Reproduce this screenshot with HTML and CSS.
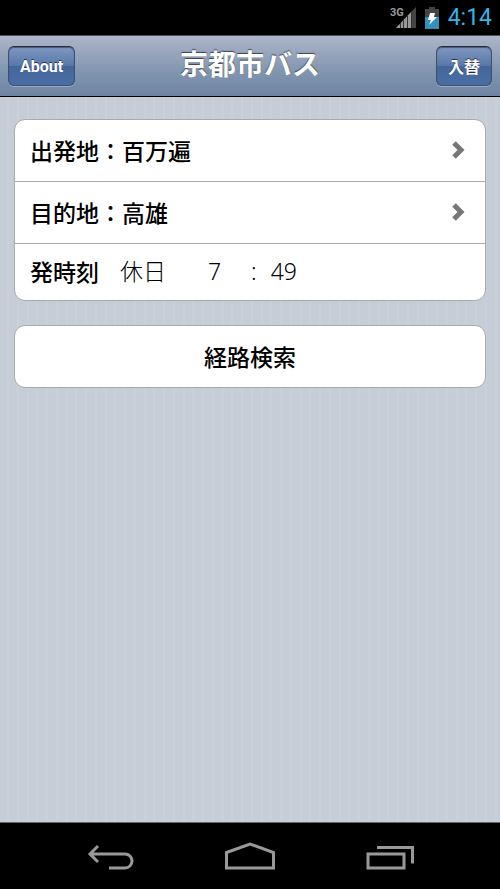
FILE: index.html
```
<!DOCTYPE html>
<html lang="ja">
<head>
    <meta charset="UTF-8">
    <meta name="viewport" content="width=device-width, initial-scale=1.0">
    <title>京都市バス</title>
    <link rel="stylesheet" href="styles.css">
</head>
<body>

<div class="statusbar">
    <svg class="signal" width="28" height="24" viewBox="0 0 28 24">
        <text class="network" x="0" y="10">3G</text>
        <path fill="#444" d="M26 1v21H6z"/>
        <path fill="#999" d="M21 6v16H6z"/>
        <path stroke="#333" d="M10.500 17v5M13.500 13v9M17.500 9v13M21.500 5v17"/>
    </svg>
    <svg class="battery" width="14" height="22" viewBox="0 0 14 22">
        <path fill="#444" d="M4 0h6v2h4v8H0V2h4z"/>
        <path fill="#3191b8" d="M0 10h14v12H0z"/>
        <path fill="#fff" d="M5 6h5l-1 4h3l-8 8 2-5H3z"/>
    </svg>
    <span class="clock">4:14</span>
</div>

<header class="toolbar">
    <button class="tool" type="button">About</button>
    <h1>京都市バス</h1>
    <button class="tool" type="button">入替</button>
</header>

<main>
    <form id="search">
        <ul class="rounded">
            <li>
                <a class="row" href="#from">出発地：百万遍
                    <svg class="chevron" width="14" height="18" viewBox="0 0 14 18"><path d="M3 2l7 7-7 7"/></svg>
                </a>
            </li>
            <li>
                <a class="row" href="#to">目的地：高雄
                    <svg class="chevron" width="14" height="18" viewBox="0 0 14 18"><path d="M3 2l7 7-7 7"/></svg>
                </a>
            </li>
            <li class="time">
                <label for="day">発時刻</label>
                <select id="day" class="day">
                    <option>平日</option>
                    <option selected>休日</option>
                </select>
                <select class="hour" aria-label="時">
                    <option>6</option>
                    <option selected>7</option>
                    <option>8</option>
                </select>
                <span class="colon">:</span>
                <select class="minute" aria-label="分">
                    <option>48</option>
                    <option selected>49</option>
                    <option>50</option>
                </select>
            </li>
        </ul>
        <button class="submit" type="submit">経路検索</button>
    </form>
</main>

<nav class="navbar">
    <button type="button" aria-label="戻る">
        <svg width="50" height="30" viewBox="0 0 50 30"><path d="M4 13h35a7 7 0 0 1 0 14H23M12 5l-8 8 8 8"/></svg>
    </button>
    <button type="button" aria-label="ホーム">
        <svg width="52" height="30" viewBox="0 0 52 30"><path d="M2.500 11.500L26 3l23.500 8.500V27h-47z"/></svg>
    </button>
    <button type="button" aria-label="履歴">
        <svg width="50" height="30" viewBox="0 0 50 30"><path d="M4 13h36v14H4zM13 6.500h35.500v16"/></svg>
    </button>
</nav>

</body>
</html>
```
FILE: styles.css
```
* {
    box-sizing: border-box;
}
body {
    display: flex;
    flex-direction: column;
    min-height: 100vh;
    margin: 0;
    background-color: #c5ced6;
    font-family: Roboto, "Noto Sans CJK JP", sans-serif;
}
button, select {
    font-family: inherit;
    cursor: pointer;
}
.statusbar {
    display: flex;
    align-items: center;
    justify-content: flex-end;
    gap: 7px;
    height: 35px;
    padding: 0 8px;
    background-color: #000;
}
.network {
    fill: #999;
    font-size: 11px;
    font-weight: bold;
}
.clock {
    margin-left: 2px;
    color: #33b5e5;
    font-size: 23px;
}
.toolbar {
    display: grid;
    grid-template-columns: 1fr auto 1fr;
    align-items: center;
    height: 62px;
    padding: 0 8px;
    border-top: 1px solid #4a505a;
    border-bottom: 1px solid #000;
    background: linear-gradient(#acb5c9, #8195af 60%, #6d84a2);
}
.toolbar h1 {
    margin: 0;
    color: #fff;
    font-size: 28px;
    line-height: 40px;
    font-weight: bold;
    text-shadow: 0 -1px 1px rgba(0, 0, 0, 0.6);
}
.tool {
    justify-self: start;
    height: 40px;
    padding: 0 11px;
    border: 1px solid #3d5270;
    border-top: 1px solid #222c3c;
    border-radius: 6px;
    background: linear-gradient(#7e98c0, #5877a9 50%, #44679b 51%, #4a6da5);
    box-shadow: 0 1px 0 rgba(255, 255, 255, 0.3), inset 0 1px 1px rgba(0, 0, 0, 0.4);
    color: #fff;
    font-size: 16px;
    font-weight: bold;
    text-shadow: 0 -1px 0 rgba(0, 0, 0, 0.6);
}
.tool:last-child {
    justify-self: end;
}
main {
    flex: 1;
    padding: 22px 14px;
    background: repeating-linear-gradient(90deg,
        #c5ced6 0 7px, #cccfda 7px 9px,
        #c5ced6 9px 17px, #cccfda 17px 19px,
        #c5ced6 19px 27px, #cccfda 27px 29px,
        #c5ced6 29px 36px, #cccfda 36px 38px,
        #c5ced6 38px 39px);
}
.rounded {
    margin: 0 0 24px;
    padding: 0;
    list-style: none;
    border: 1px solid #aaa;
    border-radius: 11px;
    background-color: #fff;
}
.rounded li + li {
    border-top: 1px solid #aaa;
}
.row {
    display: flex;
    align-items: center;
    justify-content: space-between;
    height: 61px;
    padding: 0 20px 2px 15px;
    color: #000;
    font-size: 23px;
    font-weight: 500;
    text-decoration: none;
}
.chevron {
    fill: none;
    stroke: #777;
    stroke-width: 5;
}
.time {
    display: flex;
    align-items: center;
    height: 57px;
    padding: 0 15px 2px;
    font-size: 23px;
}
.time label {
    font-weight: 500;
}
.time select, .colon {
    font-family: "Noto Sans", "Noto Sans CJK JP", sans-serif;
    font-size: 23px;
    font-weight: 300;
}
.time select {
    padding: 0;
    border: none;
    background: none;
    color: #000;
    appearance: none;
}
.day {
    width: 88px;
    margin-left: 21px;
}
.hour {
    width: 43px;
}
.minute {
    margin-left: 14px;
}
.submit {
    display: block;
    width: 100%;
    height: 63px;
    padding: 0 0 2px;
    border: 1px solid #aaa;
    border-radius: 11px;
    background-color: #fff;
    color: #000;
    font-size: 23px;
    font-weight: 500;
}
.navbar {
    display: flex;
    align-items: center;
    justify-content: center;
    gap: 88px;
    height: 67px;
    border-top: 1px solid #666;
    background-color: #000;
}
.navbar button {
    padding: 0;
    border: none;
    background: none;
}
.navbar svg {
    display: block;
    fill: none;
    stroke: #999;
    stroke-width: 3;
}
```
